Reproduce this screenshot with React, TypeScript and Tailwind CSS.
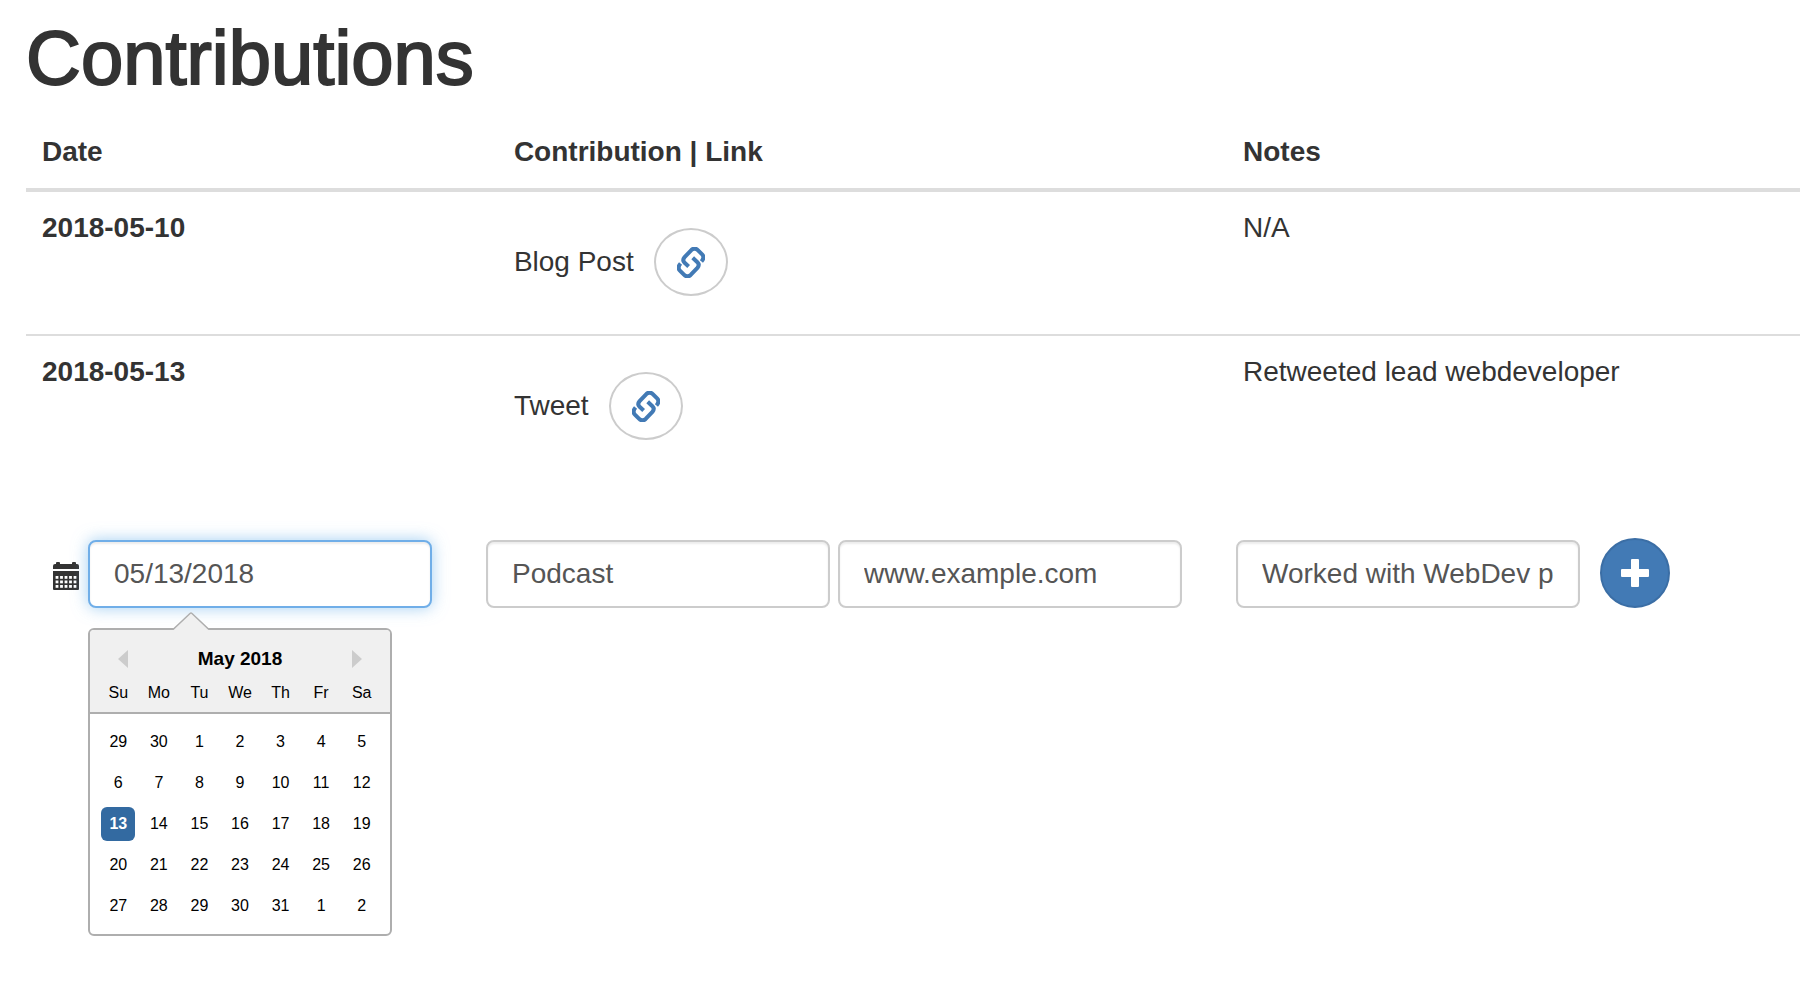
import { useState } from "react";

const contributions = [
  { date: "2018-05-10", kind: "Blog Post", notes: "N/A" },
  { date: "2018-05-13", kind: "Tweet", notes: "Retweeted lead webdeveloper" },
];

const weekdays = ["Su", "Mo", "Tu", "We", "Th", "Fr", "Sa"];

const days = [
  29, 30, 1, 2, 3, 4, 5,
  6, 7, 8, 9, 10, 11, 12,
  13, 14, 15, 16, 17, 18, 19,
  20, 21, 22, 23, 24, 25, 26,
  27, 28, 29, 30, 31, 1, 2,
];

function LinkIcon() {
  return (
    <svg
      aria-hidden="true"
      viewBox="0 0 82 92"
      className="h-[31px] w-[28px]"
      fill="none"
      stroke="currentColor"
      strokeWidth="12"
      strokeLinejoin="round"
    >
      <path d="M72 43 C80 34 79 27 74 22 L62 10 C56 4 49 3 42 9 L22 30 C17 36 17 42 22 47 L34 58" />
      <path d="M10 49 C2 58 3 65 8 70 L20 82 C26 88 33 89 40 83 L60 62 C65 56 65 50 60 45 L46 32" />
    </svg>
  );
}

function CalendarIcon() {
  return (
    <svg aria-hidden="true" viewBox="0 0 26 28" className="h-7 w-[26px]" fill="currentColor">
      <path d="M0 7V4a2 2 0 0 1 2-2h1V1a1 1 0 0 1 1-1h2a1 1 0 0 1 1 1v1h12V1a1 1 0 0 1 1-1h2a1 1 0 0 1 1 1v1h1a2 2 0 0 1 2 2v3z" />
      <path d="M0 9h26v18a1 1 0 0 1-1 1H1a1 1 0 0 1-1-1z" />
      {[14, 18.5, 23].map((y) =>
        [2.6, 7.1, 11.6, 16.1, 20.6].map((x) => (
          <rect key={`${x}-${y}`} x={x} y={y} width="2.8" height="2.8" fill="#fff" />
        )),
      )}
    </svg>
  );
}

function PlusIcon() {
  return (
    <svg aria-hidden="true" viewBox="0 0 28 28" className="size-7" fill="currentColor">
      <path d="M11 0h6a1 1 0 0 1 1 1v9h9a1 1 0 0 1 1 1v6a1 1 0 0 1-1 1h-9v9a1 1 0 0 1-1 1h-6a1 1 0 0 1-1-1v-9H1a1 1 0 0 1-1-1v-6a1 1 0 0 1 1-1h9V1a1 1 0 0 1 1-1z" />
    </svg>
  );
}

function DatePicker() {
  return (
    <div
      role="dialog"
      aria-label="Choose a date"
      className="absolute top-full left-0 mt-5 w-[304px] rounded-md border-2 border-[#aeaeae] bg-white text-black"
    >
      <svg
        aria-hidden="true"
        viewBox="0 0 36 18"
        className="absolute bottom-full left-[83px] h-[18px] w-9"
      >
        <path d="M0 18 L18 1 L36 18z" fill="#f0f0f0" />
        <path d="M0 17.500 L17 1.500 Q18 .7 19 1.500 L36 17.500" fill="none" stroke="#aeaeae" strokeWidth="1.500" />
      </svg>
      <div className="rounded-t border-b-2 border-[#aeaeae] bg-[#f0f0f0] px-2 pt-[15px] pb-[5px]">
        <div className="flex items-center justify-between px-5">
          <button type="button" aria-label="Previous month" className="text-[#ccc]">
            <svg viewBox="0 0 10 18" className="h-[18px] w-2.5" fill="currentColor">
              <path d="M10 0v18L0 9z" />
            </svg>
          </button>
          <span className="text-[19px] leading-7 font-bold">May 2018</span>
          <button type="button" aria-label="Next month" className="text-[#ccc]">
            <svg viewBox="0 0 10 18" className="h-[18px] w-2.5" fill="currentColor">
              <path d="M0 0v18l10-9z" />
            </svg>
          </button>
        </div>
        <div className="mt-1.5 grid grid-cols-7 text-center text-base leading-7">
          {weekdays.map((d) => (
            <span key={d}>{d}</span>
          ))}
        </div>
      </div>
      <div className="grid grid-cols-7 justify-items-center px-2 pt-[7px] pb-2">
        {days.map((d, i) => (
          <div key={i} className="flex h-[41px] items-center">
            <button
              type="button"
              className={
                d === 13
                  ? "size-[34px] rounded-md bg-[#336aa1] text-base font-bold text-white"
                  : "size-[34px] rounded-md text-base"
              }
            >
              {d}
            </button>
          </div>
        ))}
      </div>
    </div>
  );
}

const field =
  "h-[68px] w-86 min-w-0 rounded-lg border-2 bg-white px-6 text-[28px] text-[#555] outline-none";
const plainField = "border-[#ccc] shadow-[inset_0_2px_2px_rgba(0,0,0,0.075)]";

export default function App() {
  const [date, setDate] = useState("05/13/2018");
  const [kind, setKind] = useState("Podcast");
  const [link, setLink] = useState("www.example.com");
  const [notes, setNotes] = useState("Worked with WebDev p");

  return (
    <main className="min-h-screen bg-white pt-[18px] pl-[26px] font-['Liberation_Sans',Arial,sans-serif] text-[28px] leading-10 text-[#333]">
      <h1 className="text-[76px] leading-20 font-normal [-webkit-text-stroke:2px_#333]">Contributions</h1>
      <table className="mt-[18px] w-full table-fixed border-collapse text-left">
        <thead>
          <tr className="align-top">
            <th className="w-[26.6%] p-4">Date</th>
            <th className="w-[41.1%] p-4">Contribution | Link</th>
            <th className="p-4">Notes</th>
          </tr>
        </thead>
        <tbody>
          {contributions.map((c, i) => (
            <tr
              key={c.date}
              className={
                i === 0 ? "border-t-4 border-[#ddd] align-top" : "border-t-2 border-[#ddd] align-top"
              }
            >
              <th scope="row" className="p-4">{c.date}</th>
              <td className="px-4 pt-9 pb-[38px]">
                <div className="flex items-center gap-5">
                  <span>{c.kind}</span>
                  <a
                    href="#link"
                    aria-label={`Open ${c.kind}`}
                    className="flex h-[68px] w-[74px] items-center justify-center rounded-[50%] border-2 border-[#ccc] text-[#427ab5]"
                  >
                    <LinkIcon />
                  </a>
                </div>
              </td>
              <td className="p-4">{c.notes}</td>
            </tr>
          ))}
        </tbody>
      </table>

      <form className="mt-15 flex items-end pl-[27px]" onSubmit={(e) => e.preventDefault()}>
        <div className="flex items-center gap-[9px]">
          <label htmlFor="date" aria-label="Date" className="pt-1">
            <CalendarIcon />
          </label>
          <div className="relative">
            <input
              id="date"
              value={date}
              onChange={(e) => setDate(e.target.value)}
              className={`${field} border-[#70aee8] shadow-[inset_0_2px_2px_rgba(0,0,0,0.075),0_0_16px_rgba(102,175,233,0.6)]`}
            />
            <DatePicker />
          </div>
        </div>
        <div className="ml-[54px] flex gap-2">
          <input
            aria-label="Contribution"
            value={kind}
            onChange={(e) => setKind(e.target.value)}
            className={`${field} ${plainField}`}
          />
          <input
            aria-label="Link"
            value={link}
            onChange={(e) => setLink(e.target.value)}
            className={`${field} ${plainField}`}
          />
        </div>
        <div className="ml-[54px] flex items-end gap-5">
          <input
            aria-label="Notes"
            value={notes}
            onChange={(e) => setNotes(e.target.value)}
            className={`${field} ${plainField}`}
          />
          <button
            type="submit"
            aria-label="Add contribution"
            className="flex size-[70px] shrink-0 items-center justify-center rounded-full border-2 border-[#3b6ea5] bg-[#427ab5] text-white"
          >
            <PlusIcon />
          </button>
        </div>
      </form>
    </main>
  );
}
